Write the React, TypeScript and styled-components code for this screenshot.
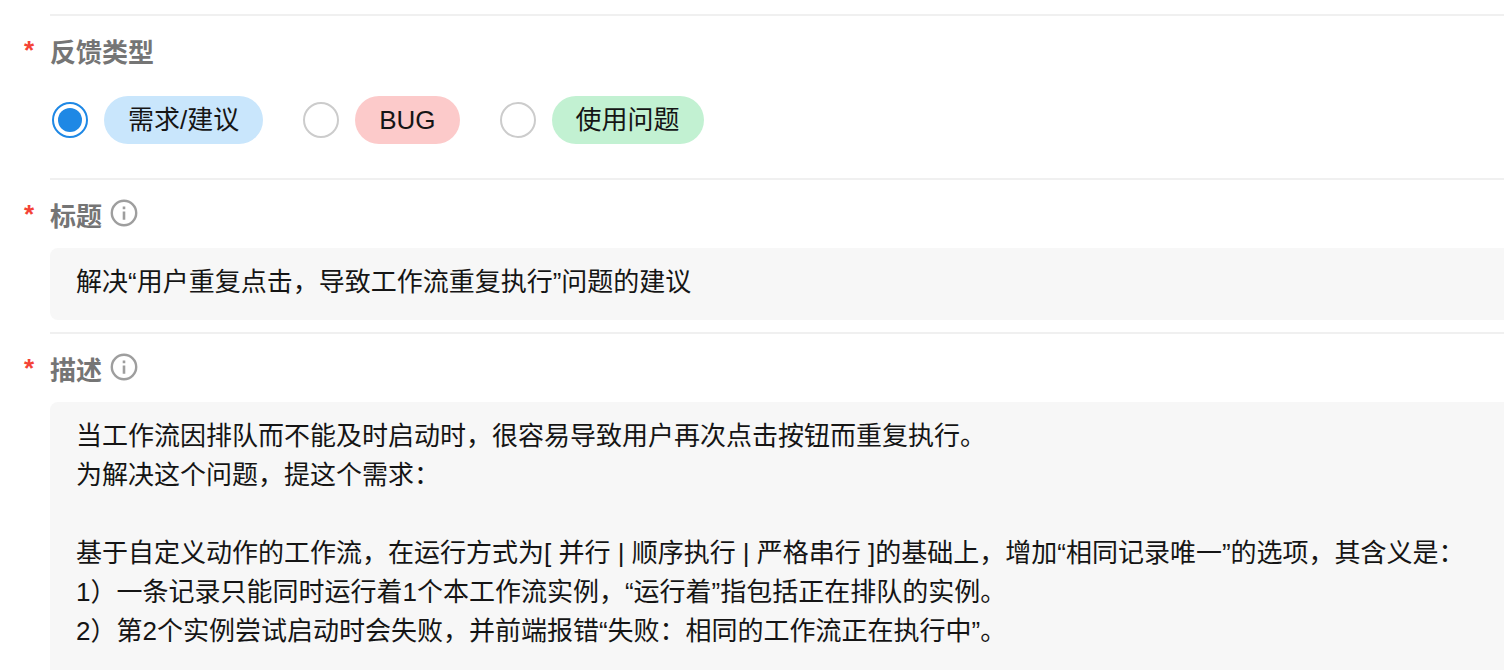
import React, { useState } from "react";
import styled, { createGlobalStyle } from "styled-components";

const GlobalStyle = createGlobalStyle`
  *, *::before, *::after { box-sizing: border-box; }
  body {
    margin: 0;
    background: #ffffff;
    color: #151515;
    font: 26px/39px "Liberation Sans", "Noto Sans CJK SC", sans-serif;
  }
`;

const Form = styled.form`
  display: flex;
  flex-direction: column;
  height: 100vh;
  overflow: hidden;
  padding: 14px 0 0 50px;
`;

const Section = styled.div<{ $bottom?: number }>`
  flex: none;
  border-top: 2px solid #f0f0f0;
  padding: 18px 0 ${(p) => p.$bottom ?? 0}px;
`;

const Group = styled.fieldset`
  min-width: 0;
  margin: 0;
  padding: 0;
  border: 0;
`;

const LabelRow = styled.div<{ $gap: number }>`
  display: flex;
  align-items: flex-start;
  height: 39px;
  margin: 0 0 ${(p) => p.$gap}px -26px;
`;

const Required = styled.span`
  width: 26px;
  color: #f44336;
  font-weight: 700;
  line-height: 32px;
`;

const labelText = `
  color: #757575;
  font-weight: 700;
`;

const FieldLabel = styled.label`
  ${labelText}
`;

const GroupLabel = styled.span`
  ${labelText}
`;

const InfoButton = styled.button`
  display: flex;
  margin: 0 0 0 8px;
  padding: 0;
  border: 0;
  background: none;
  color: #9e9e9e;
`;

const Options = styled.div`
  display: flex;
  flex-wrap: wrap;
  gap: 16px 40px;
  padding-left: 2px;
`;

const Option = styled.label`
  display: flex;
  align-items: center;
  gap: 16px;
  cursor: pointer;
`;

const Radio = styled.input`
  appearance: none;
  width: 36px;
  height: 36px;
  margin: 0;
  padding: 4px;
  border: 2px solid #cccccc;
  border-radius: 50%;
  background: #ffffff;

  &:checked {
    border-color: #1e88e5;
  }
  &:checked::before {
    content: "";
    display: block;
    width: 24px;
    height: 24px;
    border-radius: 50%;
    background: #1e88e5;
  }
`;

const Pill = styled.span<{ $color: string }>`
  height: 48px;
  padding: 0 24px;
  border-radius: 24px;
  background: ${(p) => p.$color};
  line-height: 48px;
`;

const fieldBox = `
  display: block;
  width: 100%;
  margin: 0;
  border: 0;
  border-radius: 8px 0 0 8px;
  outline: 0;
  background: #f7f7f7;
  color: inherit;
  font: inherit;
`;

const TextInput = styled.input`
  ${fieldBox}
  height: 72px;
  padding: 0 0 10px 26px;
`;

const TextArea = styled.textarea`
  ${fieldBox}
  padding: 15px 26px;
  resize: none;
  overflow: hidden;
`;

const InfoIcon = () => (
  <svg width="28" height="30" viewBox="0 0 28 30" fill="none" aria-hidden="true">
    <circle cx="14" cy="15" r="12.2" stroke="currentColor" strokeWidth="2.4" />
    <path d="M12.7 8.6h2.6v2.6h-2.6zM12.7 13.4h2.6v8.4h-2.6z" fill="currentColor" />
  </svg>
);

const types = [
  { name: "需求/建议", color: "#c9e6fc" },
  { name: "BUG", color: "#fccaca" },
  { name: "使用问题", color: "#c2f1d2" },
];

const description = `当工作流因排队而不能及时启动时，很容易导致用户再次点击按钮而重复执行。
为解决这个问题，提这个需求：

基于自定义动作的工作流，在运行方式为[ 并行 | 顺序执行 | 严格串行 ]的基础上，增加“相同记录唯一”的选项，其含义是：
1）一条记录只能同时运行着1个本工作流实例，“运行着”指包括正在排队的实例。
2）第2个实例尝试启动时会失败，并前端报错“失败：相同的工作流正在执行中”。`;

export default function App() {
  const [type, setType] = useState(types[0].name);

  return (
    <>
      <GlobalStyle />
      <Form lang="zh-CN">
        <Section $bottom={34}>
          <Group aria-labelledby="type-label">
            <LabelRow $gap={23}>
              <Required>*</Required>
              <GroupLabel id="type-label">反馈类型</GroupLabel>
            </LabelRow>
            <Options>
              {types.map((t) => (
                <Option key={t.name}>
                  <Radio
                    type="radio"
                    name="type"
                    checked={type === t.name}
                    onChange={() => setType(t.name)}
                  />
                  <Pill $color={t.color}>{t.name}</Pill>
                </Option>
              ))}
            </Options>
          </Group>
        </Section>
        <Section $bottom={12}>
          <LabelRow $gap={11}>
            <Required>*</Required>
            <FieldLabel htmlFor="title">标题</FieldLabel>
            <InfoButton type="button" aria-label="标题说明">
              <InfoIcon />
            </InfoButton>
          </LabelRow>
          <TextInput id="title" defaultValue="解决“用户重复点击，导致工作流重复执行”问题的建议" />
        </Section>
        <Section>
          <LabelRow $gap={11}>
            <Required>*</Required>
            <FieldLabel htmlFor="description">描述</FieldLabel>
            <InfoButton type="button" aria-label="描述说明">
              <InfoIcon />
            </InfoButton>
          </LabelRow>
          <TextArea id="description" rows={7} defaultValue={description} />
        </Section>
      </Form>
    </>
  );
}
